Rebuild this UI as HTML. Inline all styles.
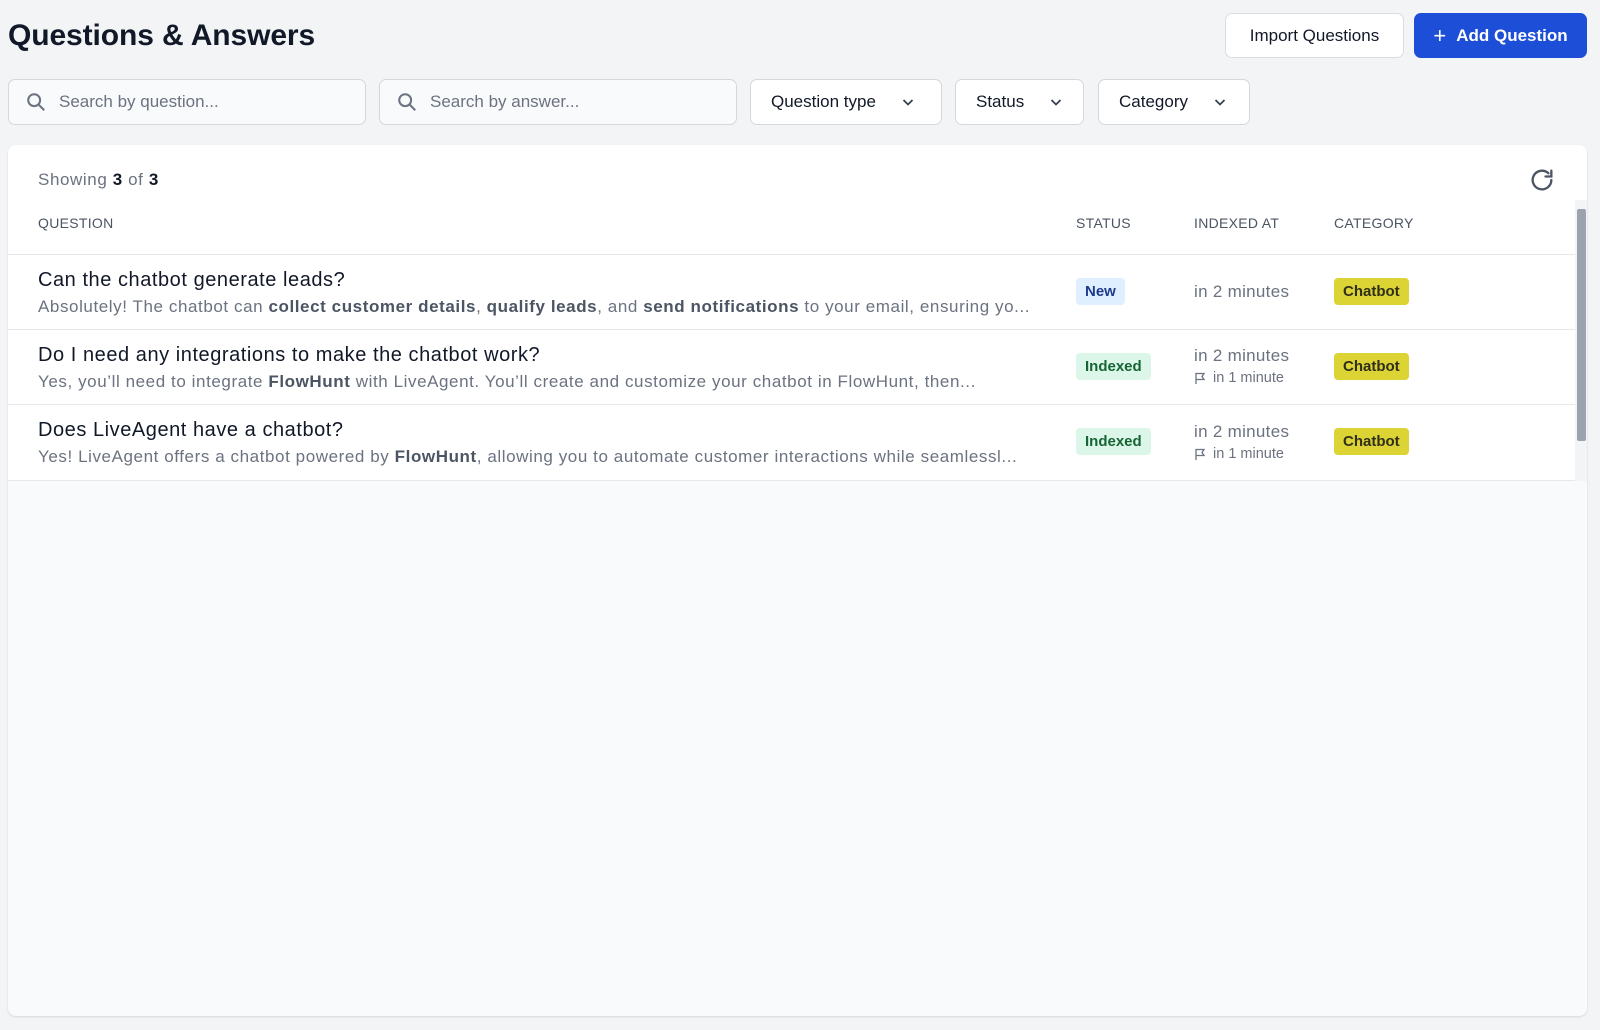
<!DOCTYPE html>
<html><head><meta charset="utf-8"><style>
*{box-sizing:border-box;margin:0;padding:0}
body{width:1600px;height:1030px;background:#f3f4f6;font-family:"Liberation Sans",sans-serif;color:#111827;position:relative;overflow:hidden}
.abs{position:absolute}
h1{position:absolute;left:8px;top:19px;font-size:30px;font-weight:700;color:#111827;letter-spacing:-0.1px}
.btn{position:absolute;top:13px;height:45px;border-radius:7px;font-size:17px;display:flex;align-items:center;justify-content:center}
.imp{left:1225px;width:179px;background:#fff;border:1px solid #d9dce1;color:#111827}
.add{left:1414px;width:173px;background:#1d4ed8;color:#fff;font-weight:600}
.inp{position:absolute;top:79px;height:46px;border:1px solid #d4d7dc;border-radius:7px;background:#f9fafb;display:flex;align-items:center;font-size:17px;color:#6b7280}
.inp svg{margin:0 12px 0 16px}
.dd{position:absolute;top:79px;height:46px;border:1px solid #d4d7dc;border-radius:7px;background:#fff;display:flex;align-items:center;padding-left:20px;font-size:17px;color:#111827}
.dd svg{margin-left:24px}
.card{position:absolute;left:8px;top:145px;width:1579px;height:871px;background:#f9fafb;border-radius:8px;box-shadow:0 1px 2px rgba(0,0,0,.12);overflow:hidden}
.top{position:absolute;left:0;top:0;width:1579px;height:336px;background:#fff;border-bottom:1px solid #e5e7eb}
.t{position:absolute;white-space:nowrap}
.hd{font-size:14px;color:#4b5563;top:70px;letter-spacing:.3px}
.row{position:absolute;left:0;width:1567px;height:75px;border-top:1px solid #e5e7eb}
.q{left:30px;top:14px;font-size:20px;color:#111827;letter-spacing:0.55px}
.a{left:30px;top:42px;font-size:17px;color:#6b7280;letter-spacing:0.58px}
.a b{color:#4b5563}
.badge{position:absolute;left:1068px;top:23px;height:27px;padding:0 9px;border-radius:4px;font-size:15px;font-weight:600;display:flex;align-items:center}
.cat{left:1326px;background:#dcd335;color:#2f2f1a}
.ix{left:1186px;font-size:17px;color:#6b7280;letter-spacing:0.3px}
.sm{left:1186px;font-size:14.5px;color:#6b7280;display:flex;align-items:center;gap:7px}
</style></head><body>
<h1>Questions &amp; Answers</h1>
<div class="btn imp">Import Questions</div>
<div class="btn add"><span style="font-size:22px;font-weight:400;margin-right:10px">+</span>Add Question</div>

<div class="inp" style="left:8px;width:358px"><svg width="22" height="22" viewBox="0 0 24 24" fill="none" stroke="#6b7280" stroke-width="2.2"><circle cx="10" cy="10" r="6.5"/><path d="M15 15l6 6"/></svg>Search by question...</div>
<div class="inp" style="left:379px;width:358px"><svg width="22" height="22" viewBox="0 0 24 24" fill="none" stroke="#6b7280" stroke-width="2.2"><circle cx="10" cy="10" r="6.5"/><path d="M15 15l6 6"/></svg>Search by answer...</div>
<div class="dd" style="left:750px;width:192px">Question type<svg width="16" height="16" viewBox="0 0 16 16" fill="none" stroke="#374151" stroke-width="1.8"><path d="M3.5 6l4.5 4.5L12.5 6"/></svg></div>
<div class="dd" style="left:955px;width:129px">Status<svg width="16" height="16" viewBox="0 0 16 16" fill="none" stroke="#374151" stroke-width="1.8"><path d="M3.5 6l4.5 4.5L12.5 6"/></svg></div>
<div class="dd" style="left:1098px;width:152px">Category<svg width="16" height="16" viewBox="0 0 16 16" fill="none" stroke="#374151" stroke-width="1.8"><path d="M3.5 6l4.5 4.5L12.5 6"/></svg></div>

<div class="card">
 <div class="top">
  <div class="t" style="left:30px;top:25px;font-size:17px;color:#6b7280;letter-spacing:0.6px">Showing <b style="color:#111827">3</b> of <b style="color:#111827">3</b></div>
  <svg class="abs" style="left:1520px;top:21px" width="28" height="28" viewBox="0 0 24 24" fill="none" stroke="#4b5563" stroke-width="2" stroke-linecap="round"><path d="M20 12a8 8 0 1 1-2.5-5.8"/><path d="M20 4v5h-5"/></svg>
  <div class="t hd" style="left:30px">QUESTION</div>
  <div class="t hd" style="left:1068px">STATUS</div>
  <div class="t hd" style="left:1186px">INDEXED AT</div>
  <div class="t hd" style="left:1326px">CATEGORY</div>
  <div class="row" style="top:109px">
   <div class="t q">Can the chatbot generate leads?</div>
   <div class="t a">Absolutely! The chatbot can <b>collect customer details</b>, <b>qualify leads</b>, and <b>send notifications</b> to your email, ensuring yo...</div>
   <div class="badge" style="background:#e0efff;color:#1e3a8a">New</div>
   <div class="t ix" style="top:27px">in 2 minutes</div>
   <div class="badge cat">Chatbot</div>
  </div>
  <div class="row" style="top:184px">
   <div class="t q">Do I need any integrations to make the chatbot work?</div>
   <div class="t a">Yes, you’ll need to integrate <b>FlowHunt</b> with LiveAgent. You’ll create and customize your chatbot in FlowHunt, then...</div>
   <div class="badge" style="background:#dcf7ea;color:#166534">Indexed</div>
   <div class="t ix" style="top:16px">in 2 minutes</div>
   <div class="t sm" style="top:40px"><svg width="12" height="13" viewBox="0 0 12 13" fill="none" stroke="#6b7280" stroke-width="1.3"><path d="M2 12V1.5h8l-2 3 2 3H2"/></svg>in 1 minute</div>
   <div class="badge cat">Chatbot</div>
  </div>
  <div class="row" style="top:259px">
   <div class="t q">Does LiveAgent have a chatbot?</div>
   <div class="t a">Yes! LiveAgent offers a chatbot powered by <b>FlowHunt</b>, allowing you to automate customer interactions while seamlessl...</div>
   <div class="badge" style="background:#dcf7ea;color:#166534">Indexed</div>
   <div class="t ix" style="top:17px">in 2 minutes</div>
   <div class="t sm" style="top:41px"><svg width="12" height="13" viewBox="0 0 12 13" fill="none" stroke="#6b7280" stroke-width="1.3"><path d="M2 12V1.5h8l-2 3 2 3H2"/></svg>in 1 minute</div>
   <div class="badge cat">Chatbot</div>
  </div>
  <div class="abs" style="left:1567px;top:55px;width:12px;height:281px;background:#f3f4f6"></div>
  <div class="abs" style="left:1569px;top:64px;width:9px;height:232px;background:#9ca3af;border-radius:2px"></div>
 </div>
</div>
</body></html>
